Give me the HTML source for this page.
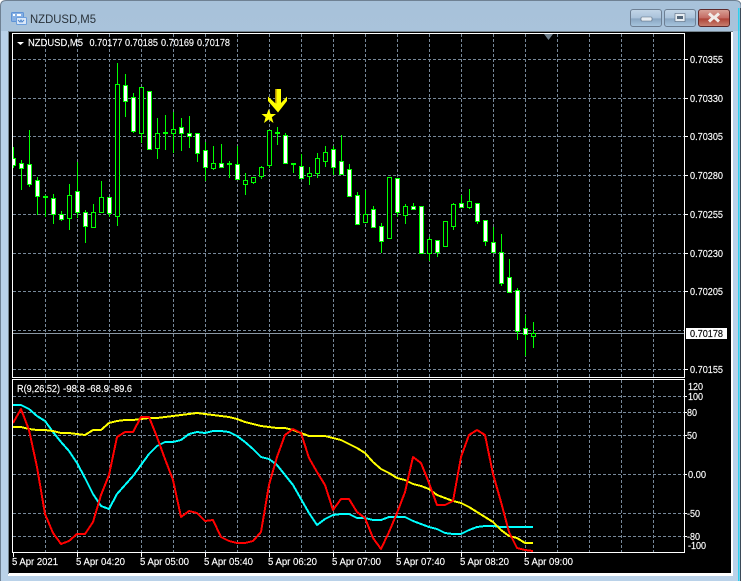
<!DOCTYPE html>
<html><head><meta charset="utf-8"><title>NZDUSD,M5</title>
<style>
html,body{margin:0;padding:0;background:#fff}
svg{display:block}
text{font-family:"Liberation Sans",sans-serif;font-size:10px;fill:#fff;stroke:#fff;stroke-width:.15px}
text.k{fill:#000;stroke:#000}
text.t{font-size:12px;fill:#29323a;stroke:none}
</style></head><body>
<svg width="742" height="581" viewBox="0 0 742 581" xmlns="http://www.w3.org/2000/svg">
<defs>
<linearGradient id="tb" x1="0" y1="0" x2="0" y2="1"><stop offset="0" stop-color="#a8c2da"/><stop offset="1" stop-color="#bcd3e9"/></linearGradient>
<linearGradient id="bt" x1="0" y1="0" x2="0" y2="1"><stop offset="0" stop-color="#c3d6e8"/><stop offset=".5" stop-color="#a9c2da"/><stop offset=".55" stop-color="#8aa6c2"/><stop offset="1" stop-color="#a8c6df"/></linearGradient>
<linearGradient id="cl" x1="0" y1="0" x2="0" y2="1"><stop offset="0" stop-color="#d9a398"/><stop offset=".5" stop-color="#c46a62"/><stop offset=".55" stop-color="#ae4438"/><stop offset="1" stop-color="#c98272"/></linearGradient>
<clipPath id="main"><rect x="13" y="34" width="671" height="343"/></clipPath>
</defs>
<rect width="742" height="581" fill="#fff"/>
<path d="M0.5 581V6Q0.5 0.5 6 0.5H735Q741 .5 741 6V581Z" fill="url(#tb)" stroke="#6f8193"/>
<rect x="1" y="31" width="740" height="550" fill="#bad2e9"/>
<rect x="738" y="8" width="1.5" height="573" fill="#2fd0ee"/>
<rect x="740" y="8" width="1" height="573" fill="#3b4a58"/>
<rect x="741" y="0" width="1" height="581" fill="#fff"/>
<rect x="8" y="31" width="725" height="545" fill="#fff"/>
<rect x="8" y="31" width="725" height="1" fill="#76858f"/>
<rect x="8" y="31" width="1" height="543" fill="#76858f"/>
<rect x="9" y="32" width="722" height="541" fill="#000"/>

<!-- title icon -->
<rect x="11.5" y="12.5" width="12" height="9" rx="1" fill="#86b0e4" stroke="#5f93d6"/>
<rect x="13" y="14" width="2" height="2" fill="#fff"/><rect x="17" y="14" width="4" height="2" fill="#fff"/>
<rect x="16.5" y="17.5" width="10" height="7" rx="1" fill="#dbe8f8" stroke="#6d9fdd"/>
<path d="M18 20l2 2 1-2 1 2 2-2" fill="none" stroke="#4f86cc"/>
<text class="t" x="30" y="23" textLength="66" lengthAdjust="spacingAndGlyphs">NZDUSD,M5</text>

<!-- window buttons -->
<rect x="630.5" y="9.5" width="31" height="17" rx="2.5" fill="url(#bt)" stroke="#6d7f93"/>
<rect x="641" y="17" width="11" height="4" rx="1" fill="#e6edf3" stroke="#56687c" stroke-width=".6"/>
<rect x="664.5" y="9.5" width="31" height="17" rx="2.5" fill="url(#bt)" stroke="#6d7f93"/>
<rect x="675" y="13.5" width="10" height="8" fill="#e6edf3" stroke="#56687c" stroke-width=".6"/>
<rect x="677" y="16" width="6" height="3" fill="#54677b"/>
<rect x="698.5" y="9.5" width="31" height="17" rx="2.5" fill="url(#cl)" stroke="#5e2a2c"/>
<path d="M709 13.500l4.500 4-4.500 4M719 13.500l-4.500 4 4.500 4" fill="none" stroke="#f1ebe8" stroke-width="3"/>

<!-- grids -->
<g fill="none" stroke="#778899" stroke-dasharray="3 2" shape-rendering="crispEdges">
<path d="M13 59.500H684M13 98.500H684M13 136.500H684M13 175.500H684M13 214.500H684M13 253.500H684M13 291.500H684M13 330.500H684M13 369.500H684"/>
<path d="M13 396.500H684M13 412.500H684M13 435.500H684M13 474.500H684M13 513.500H684M13 536.500H684"/>
<path d="M45.500 34V377M77.500 34V377M109.500 34V377M141.500 34V377M173.500 34V377M205.500 34V377M237.500 34V377M269.500 34V377M301.500 34V377M333.500 34V377M365.500 34V377M397.500 34V377M429.500 34V377M461.500 34V377M493.500 34V377M525.500 34V377M557.500 34V377M589.500 34V377M621.500 34V377M653.500 34V377"/>
<path d="M45.500 380V552M77.500 380V552M109.500 380V552M141.500 380V552M173.500 380V552M205.500 380V552M237.500 380V552M269.500 380V552M301.500 380V552M333.500 380V552M365.500 380V552M397.500 380V552M429.500 380V552M461.500 380V552M493.500 380V552M525.500 380V552M557.500 380V552M589.500 380V552M621.500 380V552M653.500 380V552"/>
</g>
<path d="M13 333.500H684" stroke="#8a97a3" shape-rendering="crispEdges"/>

<!-- candles -->
<g clip-path="url(#main)" shape-rendering="crispEdges">
<path fill="none" stroke="#00ff00" d="M13.500 147V168M21.500 160V190M29.500 130V187M37.500 177V215M45.500 195V217M53.500 194V224M61.500 211V221M69.500 184V230M77.500 162V218M85.500 210V243M93.500 204V227M101.500 181V212M109.500 197V217M117.500 63V226M125.500 74V117M133.500 93V133M141.500 87V143M149.500 91V150M157.500 118V159M165.500 115V150M173.500 112V153M181.500 118V151M189.500 116V148M197.500 133V162M205.500 142V181M213.500 146V170M221.500 144V167M229.500 161V178M237.500 146V179M245.500 173V195M253.500 177V184M261.500 166V179M269.500 130V168M277.500 127V145M285.500 133V164M293.500 163V173M301.500 154V178M309.500 167V185M317.500 153V178M325.500 146V167M333.500 146V175M341.500 135V174M349.500 164V196M357.500 192V224M365.500 190V222M373.500 206V227M381.500 223V253M389.500 177V238M397.500 178V217M405.500 204V224M413.500 203V209M421.500 206V253M429.500 237V261M437.500 240V257M445.500 221V246M453.500 203V230M461.500 195V207M469.500 189V209M477.500 203V224M485.500 220V246M493.500 227V252M501.500 234V286M509.500 259V292M517.500 288V340M525.500 315V356M533.500 322V348"/>
<path fill="#00ff00" d="M43 196h5v2h-5zM163 132h5v2h-5zM227 163h5v2h-5zM275 132h5v2h-5zM291 163h5v2h-5z"/>
<path fill="#000" stroke="#00ff00" d="M67.500 195.500h4V218.500h-4zM91.500 212.500h4V227.500h-4zM99.500 197.500h4V212.500h-4zM115.500 84.500h4V216.500h-4zM139.500 87.500h4V133.500h-4zM155.500 133.500h4V148.500h-4zM171.500 129.500h4V133.500h-4zM211.500 163.500h4V168.500h-4zM243.500 180.500h4V184.500h-4zM251.500 177.500h4V182.500h-4zM259.500 167.500h4V176.500h-4zM267.500 130.500h4V165.500h-4zM307.500 173.500h4V176.500h-4zM315.500 158.500h4V173.500h-4zM323.500 152.500h4V161.500h-4zM363.500 214.500h4V222.500h-4zM387.500 177.500h4V238.500h-4zM403.500 206.500h4V215.500h-4zM427.500 239.500h4V253.500h-4zM443.500 221.500h4V246.500h-4zM451.500 204.500h4V226.500h-4zM467.500 201.500h4V207.500h-4zM531.500 333.500h4V336.500h-4z"/>
<path fill="#fff" stroke="#00ff00" d="M11.500 158.500h4V165.500h-4zM19.500 163.500h4V168.500h-4zM27.500 164.500h4V184.500h-4zM35.500 180.500h4V196.500h-4zM51.500 198.500h4V214.500h-4zM59.500 214.500h4V219.500h-4zM75.500 191.500h4V212.500h-4zM83.500 212.500h4V226.500h-4zM107.500 197.500h4V213.500h-4zM123.500 85.500h4V101.500h-4zM131.500 97.500h4V131.500h-4zM147.500 91.500h4V149.500h-4zM179.500 127.500h4V133.500h-4zM187.500 133.500h4V136.500h-4zM195.500 133.500h4V153.500h-4zM203.500 150.500h4V167.500h-4zM219.500 163.500h4V167.500h-4zM235.500 164.500h4V179.500h-4zM283.500 135.500h4V163.500h-4zM299.500 166.500h4V178.500h-4zM331.500 149.500h4V167.500h-4zM339.500 161.500h4V174.500h-4zM347.500 169.500h4V196.500h-4zM355.500 195.500h4V224.500h-4zM371.500 209.500h4V227.500h-4zM379.500 226.500h4V241.500h-4zM395.500 178.500h4V212.500h-4zM411.500 206.500h4V209.500h-4zM419.500 206.500h4V253.500h-4zM435.500 240.500h4V252.500h-4zM459.500 203.500h4V207.500h-4zM475.500 203.500h4V221.500h-4zM483.500 220.500h4V241.500h-4zM491.500 242.500h4V252.500h-4zM499.500 252.500h4V283.500h-4zM507.500 277.500h4V292.500h-4zM515.500 290.500h4V331.500h-4zM523.500 328.500h4V334.500h-4z"/>
</g>

<!-- arrow and star -->
<path fill="#ffff00" d="M275 89H281V103L287 96.500V101L278 112.500 268 101V96.500L275 103Z"/>
<path fill="#b08a00" d="M275 89h1.500V103.500L275 103Z"/>
<path fill="#ffff00" d="M268.700 109L270.600 114H276L271.800 117.300 273.500 123 268.700 119.500 264 123 265.600 117.300 261.500 114H266.800Z"/>

<!-- indicator lines -->
<g fill="none" stroke-width="2" stroke-linejoin="round" shape-rendering="crispEdges">
<polyline stroke="#00ffff" points="13,405 21,405 29,409 37,416 45,421 53,432 61,442 69,451 77,463 85,478 93,494 101,506 109,509 117,494 125,485 133,476 141,465 149,454 157,446 165,442 173,442 181,440 189,434 197,432 205,433 213,431 221,431 229,432 237,436 245,442 253,449 261,457 269,459 277,465 285,475 293,485 301,499 309,513 317,525 325,519 333,515 341,514 349,514 357,518 365,518 373,520 381,520 389,517 397,517 405,517 413,521 421,524 429,527 437,529 445,533 453,534 461,534 469,530 477,527 485,526 493,526 501,527 509,527 517,527 525,527 533,527"/>
<polyline stroke="#ffff00" points="13,427 21,427 29,429 37,430 45,430 53,431 61,433 69,433 77,434 85,435 93,430 101,430 109,423 117,421 125,420 133,420 141,419 149,418 157,418 165,417 173,416 181,415 189,414 197,413 205,414 213,415 221,416 229,417 237,419 245,422 253,424 261,426 269,427 277,428 285,428 293,430 301,433 309,436 317,436 325,436 333,438 341,440 349,444 357,448 365,453 373,462 381,469 389,473 397,478 405,480 413,484 421,486 429,489 437,495 445,498 453,501 461,503 469,507 477,512 485,517 493,522 501,530 509,536 517,538 525,543 533,543"/>
<polyline stroke="#ff0000" points="13,423 21,409 29,430 37,467 45,514 53,533 61,544 69,541 77,534 85,534 93,522 101,495 109,475 117,437 125,432 133,432 141,417 149,417 157,437 165,459 173,480 181,517 189,511 197,513 205,521 213,520 221,537 229,541 237,543 245,543 253,541 261,532 269,485 277,457 285,435 293,429 301,433 309,458 317,472 325,485 333,510 341,499 349,499 357,512 365,518 373,538 381,549 389,532 397,513 405,492 413,457 421,463 429,483 437,505 445,505 453,501 461,457 469,435 477,430 485,435 493,474 501,502 509,532 517,548 525,550 533,551"/>
</g>

<!-- frames -->
<g fill="none" stroke="#fff" shape-rendering="crispEdges">
<rect x="12.500" y="33.500" width="672" height="344"/>
<rect x="12.500" y="379.500" width="672" height="173"/>
<path d="M685 59.500h3M685 98.500h3M685 136.500h3M685 175.500h3M685 214.500h3M685 253.500h3M685 291.500h3M685 369.500h3M685 396.500h2M685 412.500h2M685 435.500h2M685 474.500h2M685 513.500h2M685 536.500h2M13.500 553v4M77.500 553v4M141.500 553v4M205.500 553v4M269.500 553v4M333.500 553v4M397.500 553v4M461.500 553v4M525.500 553v4"/>
</g>
<path fill="#fff" d="M17 42h7l-3.500 3z"/>
<path fill="#6f7f8c" d="M544 34h9l-4.500 6z"/>

<!-- header text -->
<text x="28" y="46" textLength="55" lengthAdjust="spacingAndGlyphs">NZDUSD,M5</text>
<text x="89.500" y="46" textLength="33" lengthAdjust="spacingAndGlyphs">0.70177</text>
<text x="125" y="46" textLength="33" lengthAdjust="spacingAndGlyphs">0.70185</text>
<text x="161" y="46" textLength="33" lengthAdjust="spacingAndGlyphs">0.70169</text>
<text x="197" y="46" textLength="33" lengthAdjust="spacingAndGlyphs">0.70178</text>
<text x="17" y="392" textLength="43" lengthAdjust="spacingAndGlyphs">R(9,26,52)</text>
<text x="63" y="392" textLength="22" lengthAdjust="spacingAndGlyphs">-98.8</text>
<text x="87" y="392" textLength="22" lengthAdjust="spacingAndGlyphs">-68.9</text>
<text x="111" y="392" textLength="21" lengthAdjust="spacingAndGlyphs">-89.6</text>

<!-- price labels -->
<text x="690" y="63" textLength="33" lengthAdjust="spacingAndGlyphs">0.70355</text>
<text x="690" y="102" textLength="33" lengthAdjust="spacingAndGlyphs">0.70330</text>
<text x="690" y="140" textLength="33" lengthAdjust="spacingAndGlyphs">0.70305</text>
<text x="690" y="179" textLength="33" lengthAdjust="spacingAndGlyphs">0.70280</text>
<text x="690" y="218" textLength="33" lengthAdjust="spacingAndGlyphs">0.70255</text>
<text x="690" y="257" textLength="33" lengthAdjust="spacingAndGlyphs">0.70230</text>
<text x="690" y="295" textLength="33" lengthAdjust="spacingAndGlyphs">0.70205</text>
<rect x="686" y="328" width="41" height="11" fill="#fff"/>
<text class="k" x="690" y="337" textLength="33" lengthAdjust="spacingAndGlyphs">0.70178</text>
<text x="690" y="373" textLength="33" lengthAdjust="spacingAndGlyphs">0.70155</text>

<!-- indicator labels -->
<text x="688" y="390" textLength="15" lengthAdjust="spacingAndGlyphs">120</text>
<text x="688" y="400" textLength="15" lengthAdjust="spacingAndGlyphs">100</text>
<text x="687" y="416" textLength="10" lengthAdjust="spacingAndGlyphs">80</text>
<text x="687" y="439" textLength="10" lengthAdjust="spacingAndGlyphs">50</text>
<text x="688" y="478" textLength="18" lengthAdjust="spacingAndGlyphs">0.00</text>
<text x="687" y="517" textLength="13" lengthAdjust="spacingAndGlyphs">-50</text>
<text x="687" y="540" textLength="13" lengthAdjust="spacingAndGlyphs">-80</text>
<text x="688" y="549" textLength="18" lengthAdjust="spacingAndGlyphs">-100</text>

<!-- time labels -->
<text x="12" y="565" textLength="46" lengthAdjust="spacingAndGlyphs">5 Apr 2021</text>
<text x="76" y="565" textLength="49" lengthAdjust="spacingAndGlyphs">5 Apr 04:20</text>
<text x="140" y="565" textLength="49" lengthAdjust="spacingAndGlyphs">5 Apr 05:00</text>
<text x="204" y="565" textLength="49" lengthAdjust="spacingAndGlyphs">5 Apr 05:40</text>
<text x="268" y="565" textLength="49" lengthAdjust="spacingAndGlyphs">5 Apr 06:20</text>
<text x="332" y="565" textLength="49" lengthAdjust="spacingAndGlyphs">5 Apr 07:00</text>
<text x="396" y="565" textLength="49" lengthAdjust="spacingAndGlyphs">5 Apr 07:40</text>
<text x="460" y="565" textLength="49" lengthAdjust="spacingAndGlyphs">5 Apr 08:20</text>
<text x="524" y="565" textLength="49" lengthAdjust="spacingAndGlyphs">5 Apr 09:00</text>
</svg>
</body></html>
